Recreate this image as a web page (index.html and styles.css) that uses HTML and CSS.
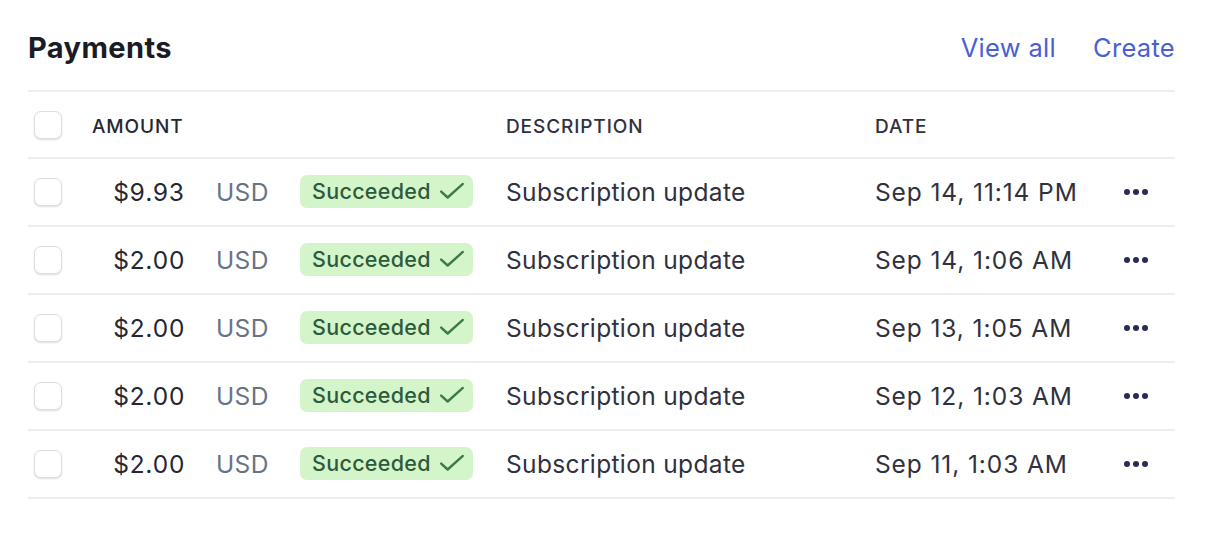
FILE: index.html
```html
<!DOCTYPE html>
<html>
<head>
<meta charset="utf-8">
<link rel="stylesheet" href="styles.css">
</head>
<body>
<div class="panel">
  <div class="head">
    <h1 class="title">Payments</h1>
    <div class="links">
      <a class="link">View all</a>
      <a class="link">Create</a>
    </div>
  </div>
  <div class="table">
    <div class="row hrow">
      <div class="c-check"><span class="box"></span></div>
      <div class="c-amount h">AMOUNT</div>
      <div class="c-cur"></div>
      <div class="c-status"></div>
      <div class="c-desc h">DESCRIPTION</div>
      <div class="c-date h">DATE</div>
      <div class="c-more"></div>
    </div>
    <div class="row">
      <div class="c-check"><span class="box"></span></div>
      <div class="c-amount">$9.93</div>
      <div class="c-cur">USD</div>
      <div class="c-status"><span class="badge">Succeeded<svg class="chk" viewBox="0 0 24 16"><path d="M2 8.5l6 5.5L22 1.5"/></svg></span></div>
      <div class="c-desc">Subscription update</div>
      <div class="c-date">Sep 14, 11:14 PM</div>
      <div class="c-more"><span class="dots"><i></i><i></i><i></i></span></div>
    </div>
    <div class="row">
      <div class="c-check"><span class="box"></span></div>
      <div class="c-amount">$2.00</div>
      <div class="c-cur">USD</div>
      <div class="c-status"><span class="badge">Succeeded<svg class="chk" viewBox="0 0 24 16"><path d="M2 8.5l6 5.5L22 1.5"/></svg></span></div>
      <div class="c-desc">Subscription update</div>
      <div class="c-date">Sep 14, 1:06 AM</div>
      <div class="c-more"><span class="dots"><i></i><i></i><i></i></span></div>
    </div>
    <div class="row">
      <div class="c-check"><span class="box"></span></div>
      <div class="c-amount">$2.00</div>
      <div class="c-cur">USD</div>
      <div class="c-status"><span class="badge">Succeeded<svg class="chk" viewBox="0 0 24 16"><path d="M2 8.5l6 5.5L22 1.5"/></svg></span></div>
      <div class="c-desc">Subscription update</div>
      <div class="c-date">Sep 13, 1:05 AM</div>
      <div class="c-more"><span class="dots"><i></i><i></i><i></i></span></div>
    </div>
    <div class="row">
      <div class="c-check"><span class="box"></span></div>
      <div class="c-amount">$2.00</div>
      <div class="c-cur">USD</div>
      <div class="c-status"><span class="badge">Succeeded<svg class="chk" viewBox="0 0 24 16"><path d="M2 8.5l6 5.5L22 1.5"/></svg></span></div>
      <div class="c-desc">Subscription update</div>
      <div class="c-date">Sep 12, 1:03 AM</div>
      <div class="c-more"><span class="dots"><i></i><i></i><i></i></span></div>
    </div>
    <div class="row">
      <div class="c-check"><span class="box"></span></div>
      <div class="c-amount">$2.00</div>
      <div class="c-cur">USD</div>
      <div class="c-status"><span class="badge">Succeeded<svg class="chk" viewBox="0 0 24 16"><path d="M2 8.5l6 5.5L22 1.5"/></svg></span></div>
      <div class="c-desc">Subscription update</div>
      <div class="c-date">Sep 11, 1:03 AM</div>
      <div class="c-more"><span class="dots"><i></i><i></i><i></i></span></div>
    </div>
  </div>
</div>
</body>
</html>
```
FILE: styles.css
```css
* { box-sizing: border-box; }
html, body { margin: 0; padding: 0; background: #fff; }
body {
  font-family: Inter, "Liberation Sans", sans-serif;
  color: #30313d;
}
.panel {
  width: 1147px;
  margin-left: 28px;
}
.head {
  height: 92px;
  padding-top: 4px;
  display: flex;
  align-items: center;
  justify-content: space-between;
  border-bottom: 2px solid #ebeef3;
}
.title {
  margin: 0;
  font-size: 29px;
  font-weight: 700;
  color: #1a1b25;
  letter-spacing: 0.4px;
}
.links {
  display: flex;
  gap: 37px;
}
.link {
  font-size: 25.5px;
  color: #4a5fd3;
  font-weight: 400;
  letter-spacing: 0.3px;
}
.row {
  display: grid;
  grid-template-columns: 64px 93px 115px 206px 369px 235px 65px;
  align-items: center;
  height: 68px;
  border-bottom: 2px solid #ebeef3;
  font-size: 24.5px;
  letter-spacing: 0.35px;
}
.hrow { height: 67px; padding-top: 3px; }
.h {
  font-size: 19px;
  font-weight: 500;
  letter-spacing: 0.9px;
  color: #1f2030;
}
.c-check { padding-left: 6px; display: flex; align-items: center; }
.hrow .c-check { margin-top: -3px; }
.box {
  width: 28px;
  height: 28px;
  border: 1.5px solid #dcdee3;
  border-radius: 7px;
  box-shadow: 0 1px 2px rgba(0,0,0,0.14);
  background: #fff;
}
.c-amount {
  text-align: right;
  color: #262733;
  font-variant-numeric: tabular-nums;
  white-space: nowrap;
}
.hrow .c-amount { text-align: left; }
.c-cur { padding-left: 31px; color: #687385; }
.badge {
  display: inline-flex;
  align-items: center;
  height: 33px;
  padding: 0 8px 0 12px;
  background: #d4f5c9;
  color: #2d5a3c;
  border-radius: 7px;
  font-size: 21.5px;
  font-weight: 500;
  letter-spacing: 0.3px;
  position: relative;
  top: -1px;
}
.chk {
  width: 26px;
  height: 18px;
  margin-left: 8px;
  fill: none;
  stroke: #3c7a4c;
  stroke-width: 2.2;
  stroke-linecap: round;
  stroke-linejoin: round;
}
.c-desc { color: #30313d; white-space: nowrap; }
.c-date { color: #30313d; letter-spacing: 0.9px; white-space: nowrap; }
.hrow .c-date { letter-spacing: 0.9px; }
.c-more { padding-left: 14px; display: flex; align-items: center; }
.dots { display: flex; gap: 3px; }
.dots i {
  width: 6px;
  height: 6px;
  border-radius: 50%;
  background: #272a5a;
  display: block;
}
```
